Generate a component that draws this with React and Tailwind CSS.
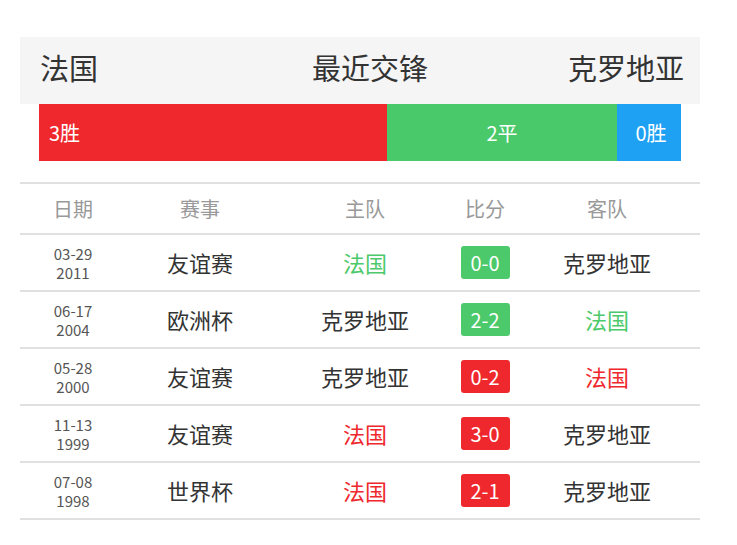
const font = { fontFamily: '"Noto Sans CJK SC", "Noto Sans", sans-serif' }

const matches = [
  { md: '03-29', y: '2011', comp: '友谊赛', home: '法国', homeC: 'text-[#4cc96a]', score: '0-0', scoreC: 'bg-[#4cc96a]', away: '克罗地亚', awayC: 'text-[#333]' },
  { md: '06-17', y: '2004', comp: '欧洲杯', home: '克罗地亚', homeC: 'text-[#333]', score: '2-2', scoreC: 'bg-[#4cc96a]', away: '法国', awayC: 'text-[#4cc96a]' },
  { md: '05-28', y: '2000', comp: '友谊赛', home: '克罗地亚', homeC: 'text-[#333]', score: '0-2', scoreC: 'bg-[#ef282d]', away: '法国', awayC: 'text-[#ef282d]' },
  { md: '11-13', y: '1999', comp: '友谊赛', home: '法国', homeC: 'text-[#ef282d]', score: '3-0', scoreC: 'bg-[#ef282d]', away: '克罗地亚', awayC: 'text-[#333]' },
  { md: '07-08', y: '1998', comp: '世界杯', home: '法国', homeC: 'text-[#ef282d]', score: '2-1', scoreC: 'bg-[#ef282d]', away: '克罗地亚', awayC: 'text-[#333]' },
]

const cols = 'grid grid-cols-[106px_148px_182px_58px_186px] items-center text-center'

export default function App() {
  return (
    <div className="w-[737px] h-[545px] bg-white pt-[37px]" style={font}>
      <div className="mx-[20px] w-[680px]">
        {/* title */}
        <div className="h-[67px] bg-[#f5f5f5] flex items-center justify-between pl-[20px] pr-[16px] pb-[6px] text-[29px] text-[#333]">
          <span>法国</span>
          <span className="ml-[74px]">最近交锋</span>
          <span>克罗地亚</span>
        </div>
        {/* record bar */}
        <div className="mx-[19px] h-[57px] flex text-white text-[20px]">
          <div className="w-[348px] bg-[#ef282d] flex items-center pl-[10px]">3胜</div>
          <div className="w-[230px] bg-[#4ac96a] flex items-center justify-center">2平</div>
          <div className="flex-1 bg-[#1ea1f3] flex items-center justify-center pl-[4px]">0胜</div>
        </div>
        {/* table */}
        <div className="mt-[21px] border-t-2 border-[#e0e0e0]">
          <div className={`${cols} h-[51px] text-[20px] text-[#999] border-b-2 border-[#e0e0e0]`}>
            <span>日期</span>
            <span>赛事</span>
            <span>主队</span>
            <span>比分</span>
            <span>客队</span>
          </div>
          {matches.map((m) => (
            <div key={m.md + m.y} className={`${cols} h-[57px] border-b-2 border-[#e0e0e0] text-[22px] text-[#333]`}>
              <div className="text-[15px] leading-[19px] text-[#555]">
                <div>{m.md}</div>
                <div>{m.y}</div>
              </div>
              <span>{m.comp}</span>
              <span className={m.homeC}>{m.home}</span>
              <div className="flex justify-center">
                <span className={`${m.scoreC} text-white text-[20px] w-[49px] h-[33px] rounded-[3px] flex items-center justify-center`}>{m.score}</span>
              </div>
              <span className={m.awayC}>{m.away}</span>
            </div>
          ))}
        </div>
      </div>
    </div>
  )
}
